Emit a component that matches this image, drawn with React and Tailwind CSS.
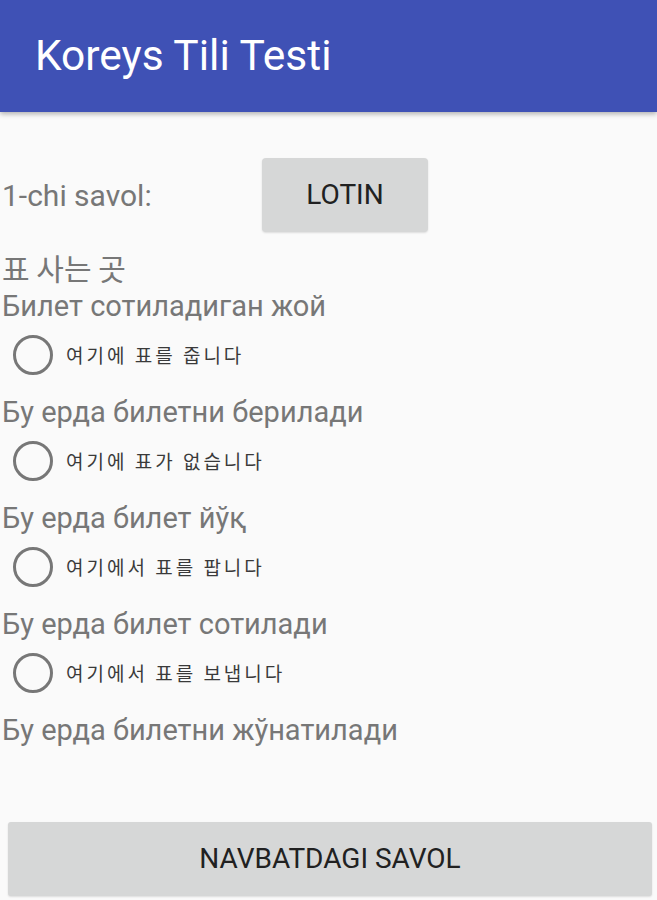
import React from "react";

const questions = [
  { label: "여기에 표를 줍니다", text: "Бу ерда билетни берилади" },
  { label: "여기에 표가 없습니다", text: "Бу ерда билет йўқ" },
  { label: "여기에서 표를 팝니다", text: "Бу ерда билет сотилади" },
  { label: "여기에서 표를 보냅니다", text: "Бу ерда билетни жўнатилади" },
];

const RadioRow = ({ label }) => (
  <div className="flex h-[66px] items-start pl-[13px] pt-[9px]">
    <div className="flex h-[40px] items-center">
      <span className="h-[40px] w-[40px] rounded-full border-[3px] border-[#777777]" />
      <span
        className="ml-[13px] text-[19px] tracking-[3px] text-[#3a3a3a]"
        style={{ fontFamily: "'Noto Sans CJK KR', sans-serif" }}
      >
        {label}
      </span>
    </div>
  </div>
);

export default function App() {
  return (
    <div
      className="flex min-h-screen flex-col bg-[#FAFAFA]"
      style={{ fontFamily: "Roboto, 'Noto Sans CJK KR', sans-serif" }}
    >
      <header className="relative z-10 flex h-[112px] items-center bg-[#3F51B5] pl-[35px] shadow-[0_2px_5px_rgba(0,0,0,0.3)]">
        <h1 className="text-[42.5px] font-normal text-white">Koreys Tili Testi</h1>
      </header>

      <div className="pt-[46px]">
        <div className="flex items-center">
          <span className="w-[262px] pl-[2px] text-[30px] text-[#777777]">1-chi savol:</span>
          <button className="flex h-[74px] w-[166px] items-center justify-center rounded-[4px] bg-[#D6D7D7] text-[28px] text-[#212121] shadow-[0_1px_2px_rgba(0,0,0,0.12)]">
            LOTIN
          </button>
        </div>

        <div
          className="mt-[16px] h-[38px] pl-[2px] text-[30px] leading-[38px] text-[#777777]"
          style={{ fontFamily: "'Noto Sans CJK KR', sans-serif" }}
        >
          표 사는 곳
        </div>
        <div className="h-[40px] pl-[2px] text-[29px] leading-[40px] text-[#777777]">
          Билет сотиладиган жой
        </div>

        {questions.map((q, i) => (
          <div key={i}>
            <RadioRow label={q.label} />
            <div className="h-[40px] pl-[2px] text-[29px] leading-[40px] text-[#777777]">{q.text}</div>
          </div>
        ))}
      </div>

      <button className="ml-[8px] mr-[5px] mt-[72px] flex h-[74px] items-center justify-center rounded-[3px] bg-[#D6D7D7] text-[28px] text-[#212121] shadow-[0_1px_2px_rgba(0,0,0,0.12)]">
        NAVBATDAGI SAVOL
      </button>
    </div>
  );
}
